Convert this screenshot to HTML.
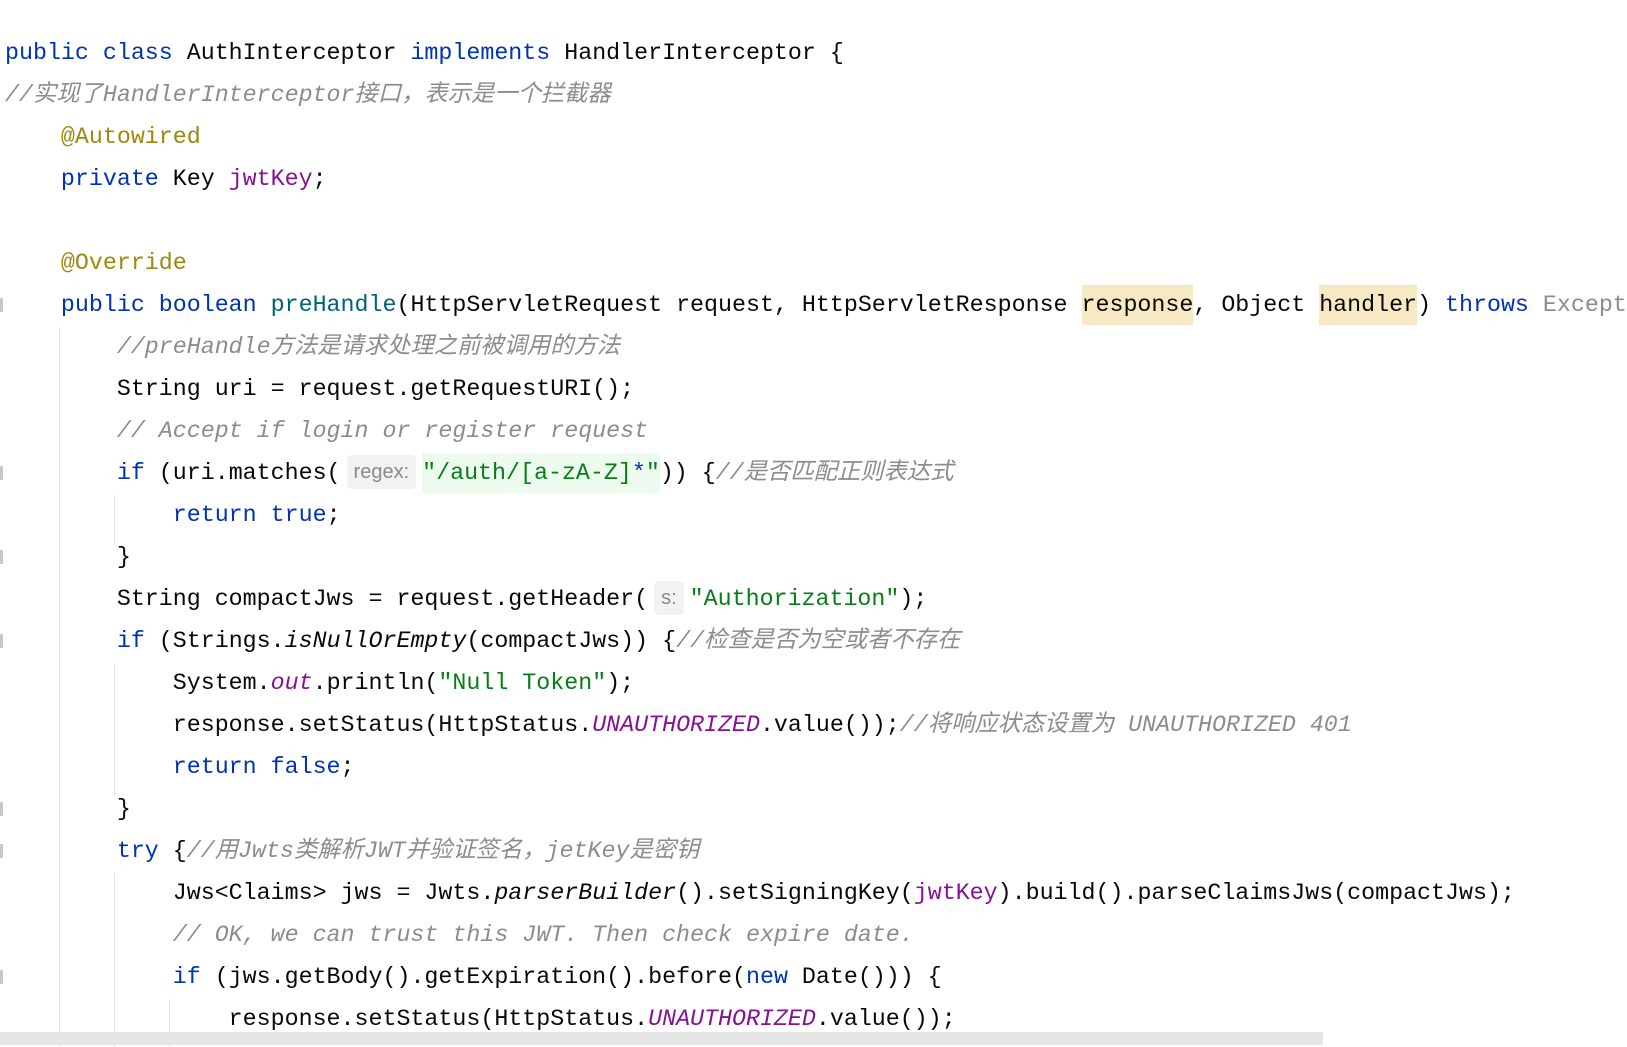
<!DOCTYPE html>
<html><head><meta charset="utf-8"><style>
body{margin:0;width:1627px;height:1045px;background:#fff;overflow:hidden;position:relative;font-family:"Liberation Mono","Noto Sans CJK SC",monospace;font-size:23.3px;color:#080808}
.w{position:absolute;left:0;top:2px;width:1627px;height:1045px}
.l{position:absolute;left:5px;height:42px;line-height:42px;white-space:pre}
.k{color:#0033b3}.s{color:#067d17}.c{color:#8c8c8c;font-style:italic}.a{color:#9e880d}.f{color:#871094}.m{color:#00627a}.fi{color:#871094;font-style:italic}.i{font-style:italic}.g{color:#8c8c8c}
.hl{background:#f6e9c3;display:inline-block;line-height:40px}
.h{display:inline-block;font-family:"Liberation Sans",sans-serif;font-size:20px;color:#8a8a8a;background:#f2f2f2;border-radius:5px;line-height:34px;padding:0 7px;margin:0 6px;vertical-align:1px}
.gs{background:#edfaee;display:inline-block;line-height:40px}
.v{position:absolute;width:1px;background:#e4e4e4}
.sb{position:absolute;left:0;top:1032px;width:1323px;height:13px;background:#e6e6e6}
.gm{position:absolute;left:0;width:3px;height:14px;background:#c8c8c8}
</style></head><body>
<div class="v" style="left:59px;top:327px;height:720px"></div>
<div class="v" style="left:114px;top:495px;height:50px"></div>
<div class="v" style="left:114px;top:663px;height:134px"></div>
<div class="v" style="left:114px;top:873px;height:174px"></div>
<div class="v" style="left:169px;top:999px;height:48px"></div>
<div class="gm" style="top:298px"></div><div class="gm" style="top:466px"></div><div class="gm" style="top:550px"></div><div class="gm" style="top:634px"></div><div class="gm" style="top:802px"></div><div class="gm" style="top:844px"></div><div class="gm" style="top:970px"></div>
<div class="w">
<div class="l" style="top:30px"><span class="k">public class</span> AuthInterceptor <span class="k">implements</span> HandlerInterceptor {</div>
<div class="l c" style="top:72px">//实现了HandlerInterceptor接口，表示是一个拦截器</div>
<div class="l" style="top:114px">    <span class="a">@Autowired</span></div>
<div class="l" style="top:156px">    <span class="k">private</span> Key <span class="f">jwtKey</span>;</div>
<div class="l" style="top:240px">    <span class="a">@Override</span></div>
<div class="l" style="top:282px">    <span class="k">public boolean</span> <span class="m">preHandle</span>(HttpServletRequest request, HttpServletResponse <span class="hl">response</span>, Object <span class="hl">handler</span>) <span class="k">throws</span> <span class="g">Exception</span></div>
<div class="l c" style="top:324px">        //preHandle方法是请求处理之前被调用的方法</div>
<div class="l" style="top:366px">        String uri = request.getRequestURI();</div>
<div class="l c" style="top:408px">        // Accept if login or register request</div>
<div class="l" style="top:450px">        <span class="k">if</span> (uri.matches(<span class="h">regex:</span><span class="s gs">"/auth/[a-zA-Z]<span class="k">*</span>"</span>)) {<span class="c">//是否匹配正则表达式</span></div>
<div class="l" style="top:492px">            <span class="k">return true</span>;</div>
<div class="l" style="top:534px">        }</div>
<div class="l" style="top:576px">        String compactJws = request.getHeader(<span class="h">s:</span><span class="s">"Authorization"</span>);</div>
<div class="l" style="top:618px">        <span class="k">if</span> (Strings.<span class="i">isNullOrEmpty</span>(compactJws)) {<span class="c">//检查是否为空或者不存在</span></div>
<div class="l" style="top:660px">            System.<span class="fi">out</span>.println(<span class="s">"Null Token"</span>);</div>
<div class="l" style="top:702px">            response.setStatus(HttpStatus.<span class="fi">UNAUTHORIZED</span>.value());<span class="c">//将响应状态设置为 UNAUTHORIZED 401</span></div>
<div class="l" style="top:744px">            <span class="k">return false</span>;</div>
<div class="l" style="top:786px">        }</div>
<div class="l" style="top:828px">        <span class="k">try</span> {<span class="c">//用Jwts类解析JWT并验证签名，jetKey是密钥</span></div>
<div class="l" style="top:870px">            Jws&lt;Claims&gt; jws = Jwts.<span class="i">parserBuilder</span>().setSigningKey(<span class="f">jwtKey</span>).build().parseClaimsJws(compactJws);</div>
<div class="l c" style="top:912px">            // OK, we can trust this JWT. Then check expire date.</div>
<div class="l" style="top:954px">            <span class="k">if</span> (jws.getBody().getExpiration().before(<span class="k">new</span> Date())) {</div>
<div class="l" style="top:996px">                response.setStatus(HttpStatus.<span class="fi">UNAUTHORIZED</span>.value());</div>
</div>
<div class="sb"></div>
</body></html>
